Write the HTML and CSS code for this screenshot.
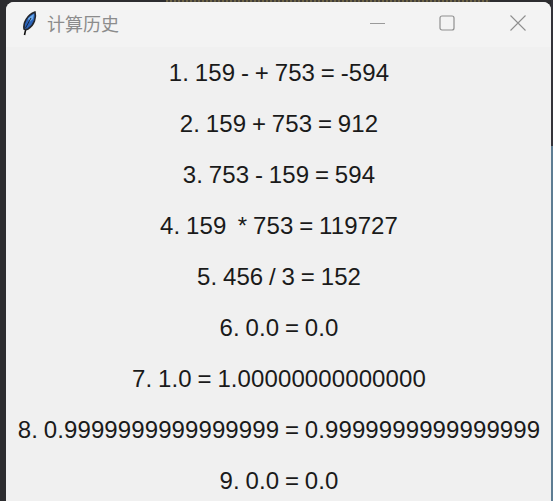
FILE: index.html
```html
<!DOCTYPE html>
<html lang="zh-CN">
<head>
    <meta charset="UTF-8">
    <title>计算历史</title>
    <link rel="stylesheet" href="styles.css">
</head>
<body>
<div class="window">
    <div class="titlebar">
        <svg class="feather" width="16" height="26" viewBox="0 0 16 26">
            <path d="M2.5 25 C3 22 3.5 20 4.5 18" fill="none" stroke="#111" stroke-width="1.6"/>
            <path d="M2 19 C1 13 5 5 13 2 C14.5 7 12.5 15 6 19 C4.5 19.6 3 19.6 2 19 Z" fill="#2a62b8" stroke="#23262c" stroke-width="1.5"/>
            <path d="M6 8.5 C8 6.5 10 5 12 4 L11 9 L7.5 12 Z" fill="#6aa9ea"/>
            <path d="M3.5 18 L9 8" fill="none" stroke="#16243c" stroke-width="1"/>
        </svg>
        <span class="title">计算历史</span>
        <div class="controls">
            <svg width="16" height="16" viewBox="0 0 16 16"><path d="M0 8.5 H15" stroke="#9a9a9a" fill="none"/></svg>
            <svg width="16" height="16" viewBox="0 0 16 16"><rect x="1" y="1" width="14" height="14" rx="2" stroke="#8f8f8f" stroke-width="1.2" fill="none"/></svg>
            <svg class="close" width="16" height="16" viewBox="0 0 16 16"><path d="M0.5 0.5 L15.5 15.5 M15.5 0.5 L0.5 15.5" stroke="#8f8f8f" stroke-width="1.1" fill="none"/></svg>
        </div>
    </div>
    <div class="history">
        <div class="row">1. 159 - + 753 = -594</div>
        <div class="row">2. 159 + 753 = 912</div>
        <div class="row">3. 753 - 159 = 594</div>
        <div class="row">4. 159&nbsp; * 753 = 119727</div>
        <div class="row">5. 456 / 3 = 152</div>
        <div class="row">6. 0.0 = 0.0</div>
        <div class="row">7. 1.0 = 1.00000000000000</div>
        <div class="row">8. 0.9999999999999999 = 0.9999999999999999</div>
        <div class="row">9. 0.0 = 0.0</div>
    </div>
</div>
</body>
</html>
```

FILE: styles.css
```css
* {
    margin: 0;
    padding: 0;
    box-sizing: border-box;
}

html, body {
    height: 100%;
    overflow: hidden;
}

/* desktop showing round the window: speckled strip on top, blue edge on the right */
body {
    background:
        repeating-linear-gradient(90deg, #6e6446 0 2px, #3e3b38 2px 4px) 166px 0 / 324px 2px no-repeat,
        linear-gradient(#33333a 0 146px, #5d7c92 146px) right top / 2px 100% no-repeat,
        #2c2c2f;
    padding: 2px 2px 0 6px;
}

.window {
    height: 499px;
    background: #f0f0f0;
    border-radius: 8px 8px 0 0;
    overflow: hidden;
}

.titlebar {
    height: 45px;
    display: flex;
    align-items: center;
    background: #f3f3f3;
    padding: 0 0 3px 16px;
}

.feather {
    flex: none;
}

.title {
    margin-left: 9px;
    font: 18px "Noto Sans CJK SC", sans-serif;
    color: #8c8c8c;
}

.controls {
    margin-left: auto;
    display: flex;
    gap: 53px;
    padding-right: 25px;
}

.close {
    margin-left: 2px;
}

.history {
    display: flex;
    flex-direction: column;
    align-items: center;
    padding-left: 1px;
}

.row {
    height: 51px;
    font: 24px/51px "Liberation Sans", sans-serif;
    letter-spacing: 0.1px;
    word-spacing: -1px;
    color: #1a1a1a;
    white-space: nowrap;
}
```
